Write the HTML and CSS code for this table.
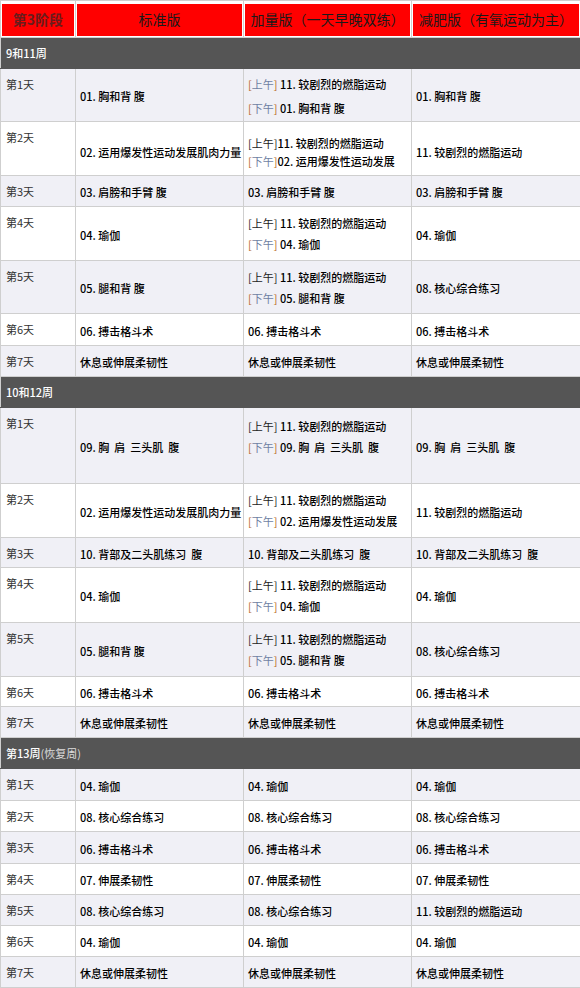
FILE: index.html
```html
<!DOCTYPE html>
<html lang="zh-CN">
<head>
<meta charset="utf-8">
<title>第3阶段训练计划</title>
<link rel="stylesheet" href="styles.css">
</head>
<body>
<table class="plan">
  <colgroup>
    <col class="c-day">
    <col class="c-plan">
    <col class="c-plan">
    <col class="c-plan-last">
  </colgroup>
  <thead>
    <tr class="h-head">
      <th class="stage">第3阶段</th>
      <th>标准版</th>
      <th>加量版（一天早晚双练）</th>
      <th>减肥版（有氧运动为主）</th>
    </tr>
  </thead>
  <tbody>
    <tr class="sec"><td colspan="4">9和11周</td></tr>
    <tr class="h53 alt">
      <td class="day">第1天</td>
      <td>01. 胸和背&nbsp;腹</td>
      <td class="loose"><div><span class="tag hl"><span class="br">[</span>上午<span class="br">]</span></span> 11. 较剧烈的燃脂运动</div><div><span class="tag hl"><span class="br">[</span>下午<span class="br">]</span></span> 01. 胸和背&nbsp;腹</div></td>
      <td>01. 胸和背&nbsp;腹</td>
    </tr>
    <tr class="h54 shift">
      <td class="day">第2天</td>
      <td>02. 运用爆发性运动发展肌肉力量</td>
      <td class="tight"><div><span class="tag">[上午]</span>11. 较剧烈的燃脂运动</div><div><span class="tag hl"><span class="br">[</span>下午<span class="br">]</span></span>02. 运用爆发性运动发展</div></td>
      <td>11. 较剧烈的燃脂运动</td>
    </tr>
    <tr class="h31 alt">
      <td class="day">第3天</td>
      <td>03. 肩膀和手臂&nbsp;腹</td>
      <td>03. 肩膀和手臂&nbsp;腹</td>
      <td>03. 肩膀和手臂&nbsp;腹</td>
    </tr>
    <tr class="h54">
      <td class="day">第4天</td>
      <td>04. 瑜伽</td>
      <td class="two"><div><span class="tag">[上午]</span> 11. 较剧烈的燃脂运动</div><div><span class="tag hl"><span class="br">[</span>下午<span class="br">]</span></span> 04. 瑜伽</div></td>
      <td>04. 瑜伽</td>
    </tr>
    <tr class="h53 alt">
      <td class="day">第5天</td>
      <td>05. 腿和背&nbsp;腹</td>
      <td class="two"><div><span class="tag">[上午]</span> 11. 较剧烈的燃脂运动</div><div><span class="tag hl"><span class="br">[</span>下午<span class="br">]</span></span> 05. 腿和背&nbsp;腹</div></td>
      <td>08. 核心综合练习</td>
    </tr>
    <tr class="h32">
      <td class="day">第6天</td>
      <td>06. 搏击格斗术</td>
      <td>06. 搏击格斗术</td>
      <td>06. 搏击格斗术</td>
    </tr>
    <tr class="h31 alt">
      <td class="day">第7天</td>
      <td>休息或伸展柔韧性</td>
      <td>休息或伸展柔韧性</td>
      <td>休息或伸展柔韧性</td>
    </tr>

    <tr class="sec"><td colspan="4">10和12周</td></tr>
    <tr class="h76 alt">
      <td class="day">第1天</td>
      <td>09. 胸&nbsp; 肩&nbsp; 三头肌&nbsp; 腹</td>
      <td class="two lift"><div><span class="tag">[上午]</span> 11. 较剧烈的燃脂运动</div><div><span class="tag hl"><span class="br">[</span>下午<span class="br">]</span></span> 09. 胸&nbsp; 肩&nbsp; 三头肌&nbsp; 腹</div></td>
      <td>09. 胸&nbsp; 肩&nbsp; 三头肌&nbsp; 腹</td>
    </tr>
    <tr class="h54">
      <td class="day">第2天</td>
      <td>02. 运用爆发性运动发展肌肉力量</td>
      <td class="two"><div><span class="tag">[上午]</span> 11. 较剧烈的燃脂运动</div><div><span class="tag hl"><span class="br">[</span>下午<span class="br">]</span></span> 02. 运用爆发性运动发展</div></td>
      <td>11. 较剧烈的燃脂运动</td>
    </tr>
    <tr class="h30 alt">
      <td class="day">第3天</td>
      <td>10. 背部及二头肌练习&nbsp; 腹</td>
      <td>10. 背部及二头肌练习&nbsp; 腹</td>
      <td>10. 背部及二头肌练习&nbsp; 腹</td>
    </tr>
    <tr class="h55">
      <td class="day">第4天</td>
      <td>04. 瑜伽</td>
      <td class="two"><div><span class="tag">[上午]</span> 11. 较剧烈的燃脂运动</div><div><span class="tag hl"><span class="br">[</span>下午<span class="br">]</span></span> 04. 瑜伽</div></td>
      <td>04. 瑜伽</td>
    </tr>
    <tr class="h54 alt">
      <td class="day">第5天</td>
      <td>05. 腿和背&nbsp;腹</td>
      <td class="two"><div><span class="tag">[上午]</span> 11. 较剧烈的燃脂运动</div><div><span class="tag hl"><span class="br">[</span>下午<span class="br">]</span></span> 05. 腿和背&nbsp;腹</div></td>
      <td>08. 核心综合练习</td>
    </tr>
    <tr class="h30">
      <td class="day">第6天</td>
      <td>06. 搏击格斗术</td>
      <td>06. 搏击格斗术</td>
      <td>06. 搏击格斗术</td>
    </tr>
    <tr class="h31 alt">
      <td class="day">第7天</td>
      <td>休息或伸展柔韧性</td>
      <td>休息或伸展柔韧性</td>
      <td>休息或伸展柔韧性</td>
    </tr>

    <tr class="sec h30"><td colspan="4">第13周<span class="sub">(恢复周)</span></td></tr>
    <tr class="h32 alt">
      <td class="day">第1天</td>
      <td>04. 瑜伽</td>
      <td>04. 瑜伽</td>
      <td>04. 瑜伽</td>
    </tr>
    <tr class="h31">
      <td class="day">第2天</td>
      <td>08. 核心综合练习</td>
      <td>08. 核心综合练习</td>
      <td>08. 核心综合练习</td>
    </tr>
    <tr class="h32 alt">
      <td class="day">第3天</td>
      <td>06. 搏击格斗术</td>
      <td>06. 搏击格斗术</td>
      <td>06. 搏击格斗术</td>
    </tr>
    <tr class="h31">
      <td class="day">第4天</td>
      <td>07. 伸展柔韧性</td>
      <td>07. 伸展柔韧性</td>
      <td>07. 伸展柔韧性</td>
    </tr>
    <tr class="h31 alt">
      <td class="day">第5天</td>
      <td>08. 核心综合练习</td>
      <td>08. 核心综合练习</td>
      <td>11. 较剧烈的燃脂运动</td>
    </tr>
    <tr class="h31">
      <td class="day">第6天</td>
      <td>04. 瑜伽</td>
      <td>04. 瑜伽</td>
      <td>04. 瑜伽</td>
    </tr>
    <tr class="h31 alt">
      <td class="day">第7天</td>
      <td>休息或伸展柔韧性</td>
      <td>休息或伸展柔韧性</td>
      <td>休息或伸展柔韧性</td>
    </tr>
  </tbody>
</table>
</body>
</html>
```

FILE: styles.css
```css
html, body {
  margin: 0;
  padding: 0;
  background: #fff;
}

body {
  font-family: "Noto Sans CJK SC", "Noto Sans", sans-serif;
  font-size: 11px;
  color: #000;
}

.plan {
  width: 580px;
  border-collapse: collapse;
  table-layout: fixed;
}

.c-day { width: 75px; }
.c-plan { width: 168px; }
.c-plan-last { width: 169px; }

.plan th,
.plan td {
  border: 1px solid #cfcfcf;
  padding: 2px 4px 0 4px;
  line-height: 16px;
  vertical-align: middle;
  text-align: left;
  white-space: nowrap;
  overflow: hidden;
  font-weight: 500;
}

.plan tr { background: #fff; }
.plan tr.alt { background: #f0f0f6; }

.h-head { height: 37px; }
.plan th {
  background: #ff0000;
  color: #1a1a1a;
  font-size: 14px;
  font-weight: normal;
  text-align: center;
  padding: 0;
  box-shadow: inset 0 0 0 1px #fff, inset 0 3px 0 #fff;
}
.plan th.stage {
  font-weight: bold;
  color: #6a1c1c;
}

.plan tr.sec { height: 31px; background: #555555; }
.plan tr.sec td {
  color: #fff;
  padding: 0 5px;
  border-color: #555555 #cfcfcf;
}
.sub { color: #dcdcdc; font-weight: normal; }

.h30 { height: 30px; }
.h31 { height: 31px; }
.h32 { height: 32px; }
.h53 { height: 53px; }
.h54 { height: 54px; }
.h55 { height: 55px; }
.h76 { height: 76px; }

.plan td.day {
  vertical-align: top;
  color: #333;
  font-weight: normal;
  padding: 7px 5px 0 5px;
}

.plan td.two { line-height: 21px; padding-top: 1px; }
.plan td.loose { line-height: 24px; padding-top: 1px; }
.plan td.tight { line-height: 18px; }
.plan tr.shift td { padding-top: 7px; }
.plan tr.shift td.day { padding-top: 7px; }
.plan td.lift { padding-bottom: 18px; }

.tag { color: #222; font-weight: normal; }
.tag.hl { color: #6f7fa3; }
.tag .br { color: #b8681c; }
```
